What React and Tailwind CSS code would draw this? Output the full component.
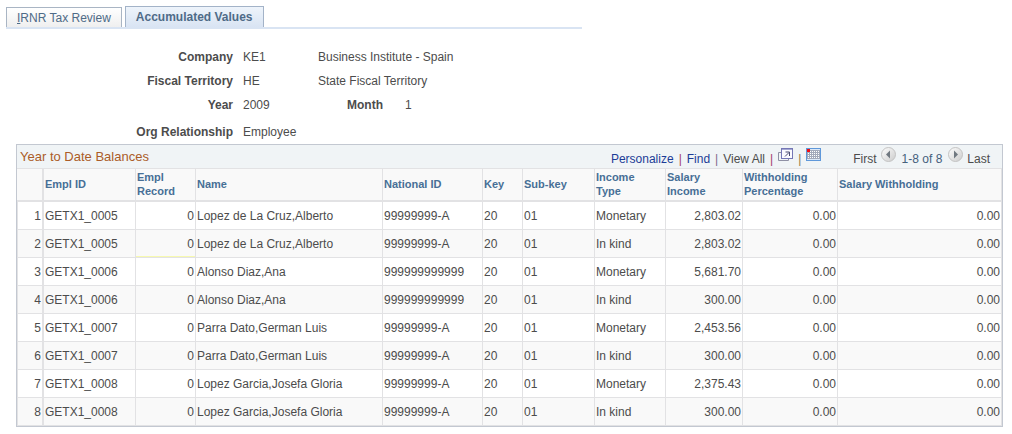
import React from "react";

const columns = [
  { label: "Empl ID", width: "w-[92px]" },
  { label: "Empl Record", width: "w-[60px]" },
  { label: "Name", width: "w-[187px]" },
  { label: "National ID", width: "w-[100px]" },
  { label: "Key", width: "w-[40px]" },
  { label: "Sub-key", width: "w-[72px]" },
  { label: "Income\nType", width: "w-[71px]" },
  { label: "Salary Income", width: "w-[77px]" },
  { label: "Withholding Percentage", width: "w-[95px]" },
  { label: "Salary Withholding", width: "" },
];

const balances = [
  { emplId: "GETX1_0005", name: "Lopez de La Cruz,Alberto", nationalId: "99999999-A", type: "Monetary", income: "2,803.02" },
  { emplId: "GETX1_0005", name: "Lopez de La Cruz,Alberto", nationalId: "99999999-A", type: "In kind", income: "2,803.02", marked: true },
  { emplId: "GETX1_0006", name: "Alonso Diaz,Ana", nationalId: "999999999999", type: "Monetary", income: "5,681.70" },
  { emplId: "GETX1_0006", name: "Alonso Diaz,Ana", nationalId: "999999999999", type: "In kind", income: "300.00" },
  { emplId: "GETX1_0007", name: "Parra Dato,German Luis", nationalId: "99999999-A", type: "Monetary", income: "2,453.56" },
  { emplId: "GETX1_0007", name: "Parra Dato,German Luis", nationalId: "99999999-A", type: "In kind", income: "300.00" },
  { emplId: "GETX1_0008", name: "Lopez Garcia,Josefa Gloria", nationalId: "99999999-A", type: "Monetary", income: "2,375.43" },
  { emplId: "GETX1_0008", name: "Lopez Garcia,Josefa Gloria", nationalId: "99999999-A", type: "In kind", income: "300.00" },
];

function Tabs() {
  return (
    <div role="tablist" className="ml-[6px] flex max-w-[576px] items-end gap-[3px] border-b-2 border-[#d9e4f3]">
      <button
        role="tab"
        aria-selected="false"
        className="h-5 border border-b-0 border-[#a9b5c4] bg-linear-to-b from-white to-[#efefef] px-[10px] text-[#4f6b87]"
      >
        <span className="underline">I</span>RNR Tax Review
      </button>
      <button
        role="tab"
        aria-selected="true"
        className="h-[21px] border border-b-0 border-[#a3b3c8] bg-linear-to-b from-[#eef4fb] to-[#d9e4f3] px-[10px] font-bold text-[#4f6b87]"
      >
        Accumulated Values
      </button>
    </div>
  );
}

function Details() {
  return (
    <dl className="grid grid-cols-[233px_65px_65px_auto] gap-x-[10px] pt-4 leading-6 text-[#4c4c4c]">
      <dt className="text-right font-bold">Company</dt>
      <dd>KE1</dd>
      <dd className="col-span-2">Business Institute - Spain</dd>
      <dt className="text-right font-bold">Fiscal Territory</dt>
      <dd>HE</dd>
      <dd className="col-span-2">State Fiscal Territory</dd>
      <dt className="text-right font-bold">Year</dt>
      <dd>2009</dd>
      <dt className="text-right font-bold">Month</dt>
      <dd className="pl-3">1</dd>
      <dt className="pt-[3px] text-right font-bold">Org Relationship</dt>
      <dd className="col-span-3 pt-[3px]">Employee</dd>
    </dl>
  );
}

function ZoomIcon() {
  return (
    <svg width="15" height="13" viewBox="0 0 15 13" fill="none">
      <path d="M3 4.5H.5v8h10V11" stroke="#8f90a4" />
      <rect x="3.5" y=".5" width="11" height="10" fill="#fbfbff" stroke="#7577b5" />
      <path d="M4 1.5h10" stroke="#a5a8d4" />
      <path d="M7 8.5l4-4M7.5 4h4v4" stroke="#4b4d72" />
    </svg>
  );
}

function SheetIcon() {
  return (
    <svg width="15" height="13" viewBox="0 0 15 13">
      <rect x=".5" y=".5" width="14" height="12" fill="#a3a9ba" stroke="#5f98da" />
      <path d="M1 1.5h13M1 11.5h13" stroke="#dbe8f8" />
      <path d="M2 3.5h12M2 5.5h12M2 7.5h12M2 9.5h12" stroke="#fff" strokeDasharray="1 1" />
      <rect x="1" y="1" width="3" height="3" fill="#f00d17" />
    </svg>
  );
}

function ArrowIcon({ next }) {
  return (
    <svg width="15" height="15" viewBox="0 0 15 15">
      <defs>
        <linearGradient id={next ? "next-face" : "prev-face"} x1="0" y1="0" x2="1" y2="1">
          <stop offset="0" stopColor="#fff" />
          <stop offset="1" stopColor="#cbcbcb" />
        </linearGradient>
      </defs>
      <circle cx="7.5" cy="7.5" r="7" fill={next ? "url(#next-face)" : "url(#prev-face)"} stroke="#c3c3c3" />
      <path d={next ? "M6 3.5v8l4-4z" : "M9 3.5v8l-4-4z"} fill="#707880" />
    </svg>
  );
}

function GridBar() {
  return (
    <div className="flex h-[23px] items-center justify-between bg-[#f0f4f6] pl-[3px] pr-3 text-[#4c4c4c]">
      <h2 className="text-[13px] text-[#ab5c28]">Year to Date Balances</h2>
      <div className="flex h-full items-end leading-[18px]">
        <div className="flex items-end gap-[5px]">
          <a href="#personalize" className="text-[#1c3c96]">Personalize</a>
          <span className="text-[#a33b6e]">|</span>
          <a href="#find" className="text-[#1c3c96]">Find</a>
          <span className="text-[#7d6a8c]">|</span>
          <span>View All</span>
          <span className="text-[#a33b6e]">|</span>
          <button aria-label="Zoom" className="pb-[7px]"><ZoomIcon /></button>
          <span className="text-[#8b7a45]">|</span>
          <button aria-label="Download" className="pb-[7px]"><SheetIcon /></button>
        </div>
        <div className="ml-8 flex items-end gap-1">
          <span>First</span>
          <button aria-label="Previous rows" className="pb-[6px]"><ArrowIcon /></button>
          <span className="px-[2px] text-[#45607c]">1-8 of 8</span>
          <button aria-label="Next rows" className="pb-[6px]"><ArrowIcon next /></button>
          <span>Last</span>
        </div>
      </div>
    </div>
  );
}

function Cell({ right, marked, children }) {
  return (
    <td
      className={`h-7 border-b border-r border-[#e2e2e4] px-px ${right ? "text-right" : ""} ${
        marked ? "shadow-[inset_0_-1px_0_#f7f9b0]" : ""
      }`}
    >
      {children}
    </td>
  );
}

function BalanceTable() {
  return (
    <table className="w-full table-fixed border-separate border-spacing-0 leading-[14px] text-[#4c4c4c]">
      <thead>
        <tr className="bg-[#f9f9f9] text-left text-[11px] text-[#476f96]">
          <td className="h-[34px] w-[27px] border-b-2 border-r-2 border-t border-[#e2e2e4]" />
          {columns.map((col) => (
            <th
              key={col.label}
              scope="col"
              className={`${col.width} whitespace-pre-line border-b-2 border-r border-t border-[#e2e2e4] px-px pb-[2px]`}
            >
              {col.label}
            </th>
          ))}
        </tr>
      </thead>
      <tbody>
        {balances.map((row, index) => (
          <tr key={index} className="even:bg-[#f9f9f9]">
            <td className="h-7 border-b border-l border-r-2 border-[#e2e2e4] pr-px text-right">{index + 1}</td>
            <Cell>{row.emplId}</Cell>
            <Cell right marked={row.marked}>0</Cell>
            <Cell>{row.name}</Cell>
            <Cell>{row.nationalId}</Cell>
            <Cell>20</Cell>
            <Cell>01</Cell>
            <Cell>{row.type}</Cell>
            <Cell right>{row.income}</Cell>
            <Cell right>0.00</Cell>
            <Cell right>0.00</Cell>
          </tr>
        ))}
      </tbody>
    </table>
  );
}

export default function App() {
  return (
    <main className="bg-white pb-[7px] pt-[6px] font-['Liberation_Sans',Arial,sans-serif] text-[12px]">
      <Tabs />
      <Details />
      <section className="ml-4 mr-[9px] border border-[#c3c8d1]">
        <GridBar />
        <BalanceTable />
      </section>
    </main>
  );
}
